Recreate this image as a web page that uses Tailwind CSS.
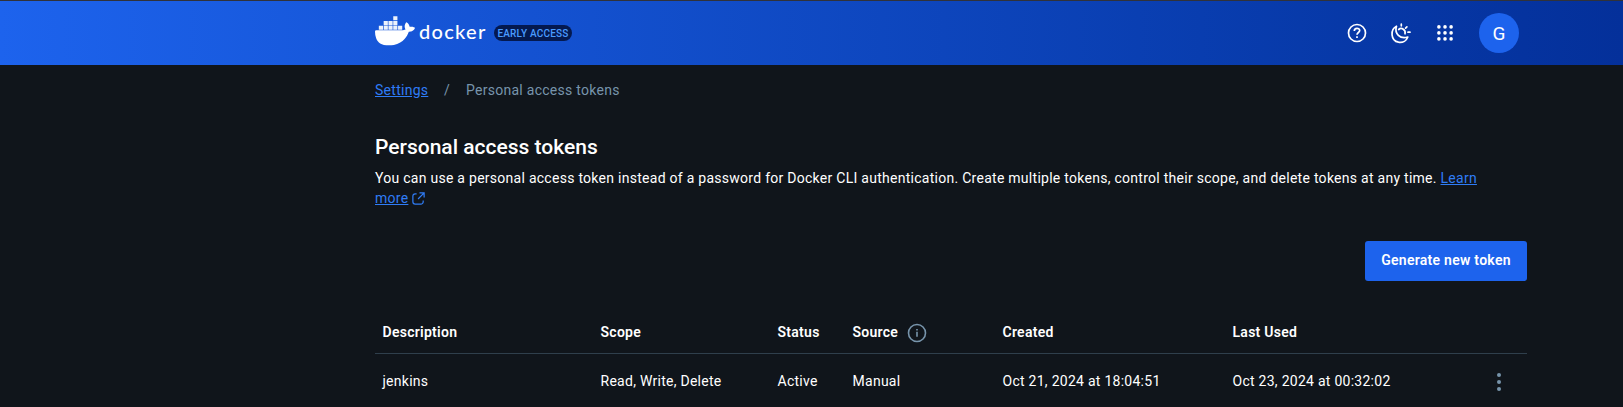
<!DOCTYPE html>
<html lang="en">
<head>
<meta charset="utf-8">
<title>Personal access tokens</title>
<script src="https://cdn.jsdelivr.net/npm/@tailwindcss/browser@4"></script>
</head>
<body class="h-[407px] overflow-hidden bg-[#10151b] font-['Roboto',sans-serif] text-sm tracking-[0.27px] text-white">
<header class="h-[65px] border-t border-[#30323a] bg-linear-to-r from-[#1d63ed] to-[#04309a]">
  <div class="ml-[375px] flex h-16 w-[1152px] items-center justify-between">
    <div class="flex items-center">
      <svg class="-mt-1 size-10" viewBox="0 0 24 24" fill="#fff">
        <g fill-opacity=".92">
          <path d="M10.950 3.100h2.500v2.500h-2.500zM5.200 6h2.500v2.500H5.200zM8.080 6h2.500v2.500H8.080zM10.950 6h2.500v2.500h-2.500zM2.300 8.900H4.800v2.300H2.300zM5.200 8.900h2.500v2.300H5.200zM8.080 8.900h2.500v2.300H8.080zM10.950 8.900h2.500v2.300h-2.500zM13.830 8.900h2.500v2.300h-2.500z"/>
        </g>
        <path d="M23.763 9.89c-.065-.051-.672-.51-1.954-.51-.338.001-.676.03-1.01.087-.248-1.7-1.653-2.53-1.716-2.566l-.344-.199-.226.327c-.284.438-.49.922-.612 1.43-.23.97-.09 1.882.403 2.661-.595.332-1.55.413-1.744.42H.751a.751.751 0 00-.75.748 11.376 11.376 0 00.692 4.062c.545 1.428 1.355 2.48 2.41 3.124 1.18.723 3.1 1.137 5.275 1.137.983.003 1.963-.086 2.93-.266a12.248 12.248 0 003.823-1.389c.98-.567 1.86-1.288 2.61-2.136 1.252-1.418 1.998-2.997 2.553-4.4h.221c1.372 0 2.215-.549 2.68-1.009.309-.293.55-.65.707-1.046l.098-.288Z"/>
      </svg>
      <span class="-mt-1 ml-[4px] w-[75px] font-['Lato',sans-serif] text-[20px] leading-6 font-medium tracking-[1.300px]">docker</span>
      <span class="flex h-4 w-[78px] items-center justify-center rounded-full bg-[#04194f] pt-[2px] text-[10px] font-medium tracking-[0.2px] whitespace-nowrap text-[#4a9bff]">EARLY ACCESS</span>
    </div>
    <div class="mr-2 flex items-center">
      <svg class="mr-5 size-6" viewBox="0 0 24 24" fill="none" stroke="#fff" stroke-width="1.7"><circle cx="12" cy="12" r="8.5"/><path d="M9.3 10c0-3.6 5.4-3.3 5.4-.4 0 1.900-2.700 2-2.700 4.200M12 15.300v1.700"/></svg>
      <svg class="mr-5 size-6" viewBox="0 0 24 24" fill="none" stroke="#fff" stroke-width="1.700" stroke-linecap="round" stroke-linejoin="round"><path d="M7.500 5.200C1 8.500 1.500 19.500 9.500 21.200c4.500.8 8-1.700 9.300-5.200C11 18.500 5.200 12.500 7.500 5.200z"/><path d="M9.700 8.500c2.800-2.500 7.300.300 6.300 4.300M12.300 3.200v1.600M17.900 5.800l-1.300 1.300M19 11.200h2"/></svg>
      <svg class="mr-[22px] size-6" viewBox="0 0 24 24" fill="#fff"><g id="dots"><circle cx="5.900" cy="5.900" r="1.800"/><circle cx="12" cy="5.900" r="1.800"/><circle cx="18.100" cy="5.900" r="1.800"/></g><use href="#dots" y="6"/><use href="#dots" y="12"/></svg>
      <span class="flex size-10 items-center justify-center rounded-full bg-[#1d63ed] pt-px text-[19px] font-[450] tracking-normal">G</span>
    </div>
  </div>
</header>
<main class="ml-[375px] w-[1152px]">
  <nav class="flex h-[50px] items-center text-[#7794ab]"><a class="w-[69px] text-[#2f7cf6] underline">Settings</a><span class="w-[22px]">/</span><span>Personal access tokens</span></nav>
  <h1 class="mt-[18px] h-7 text-[21px] leading-7 font-medium tracking-normal">Personal access tokens</h1>
  <p class="mt-[7px] leading-5 whitespace-nowrap">You can use a personal access token instead of a password for Docker CLI authentication. Create multiple tokens, control their scope, and delete tokens at any time. <a class="text-[#2f7cf6] underline">Learn<br>more</a><svg class="ml-[3px] inline size-[15px] align-[-3px]" viewBox="0 0 16 16" fill="none" stroke="#2f7cf6" stroke-width="1.300"><path d="M6 3H4.500A2.500 2.500 0 0 0 2 5.500v6A2.500 2.500 0 0 0 4.500 14h6a2.500 2.500 0 0 0 2.500-2.500V10M9 2h5v5M14 2 7.500 8.500"/></svg></p>
  <div class="mt-[33px] flex justify-end"><button class="h-10 w-[162px] rounded-[3px] bg-[#1d63ed] pb-0.5 font-semibold whitespace-nowrap">Generate new token</button></div>
  <table class="mt-[31px] w-full table-fixed text-left">
    <colgroup><col class="w-[218px]"><col class="w-[177px]"><col class="w-[75px]"><col class="w-[150px]"><col class="w-[230px]"><col class="w-[238px]"><col></colgroup>
    <thead><tr class="h-[41px] border-b border-[#2f3f4c] [&>th]:p-0 [&>th]:pl-[7.500px] [&>th]:font-semibold">
      <th>Description</th><th>Scope</th><th>Status</th>
      <th><span class="flex items-center gap-[9px]">Source<svg class="mt-px size-5" viewBox="0 0 20 20" fill="none" stroke="#7794ab" stroke-width="1.600"><circle cx="10" cy="10" r="8.500"/><path d="M10 8.800v5M10 6v1.600"/></svg></span></th>
      <th>Created</th><th>Last Used</th><th></th>
    </tr></thead>
    <tbody><tr class="h-14 [&>td]:p-0 [&>td]:pl-[7.500px]">
      <td>jenkins</td><td>Read, Write, Delete</td><td>Active</td><td>Manual</td><td>Oct 21, 2024 at 18:04:51</td><td>Oct 23, 2024 at 00:32:02</td>
      <td><svg class="mt-px ml-5 h-5 w-6" viewBox="0 0 24 20" fill="#7794ab"><circle cx="8" cy="3" r="2"/><circle cx="8" cy="10" r="2"/><circle cx="8" cy="17" r="2"/></svg></td>
    </tr></tbody>
  </table>
</main>
</body>
</html>
